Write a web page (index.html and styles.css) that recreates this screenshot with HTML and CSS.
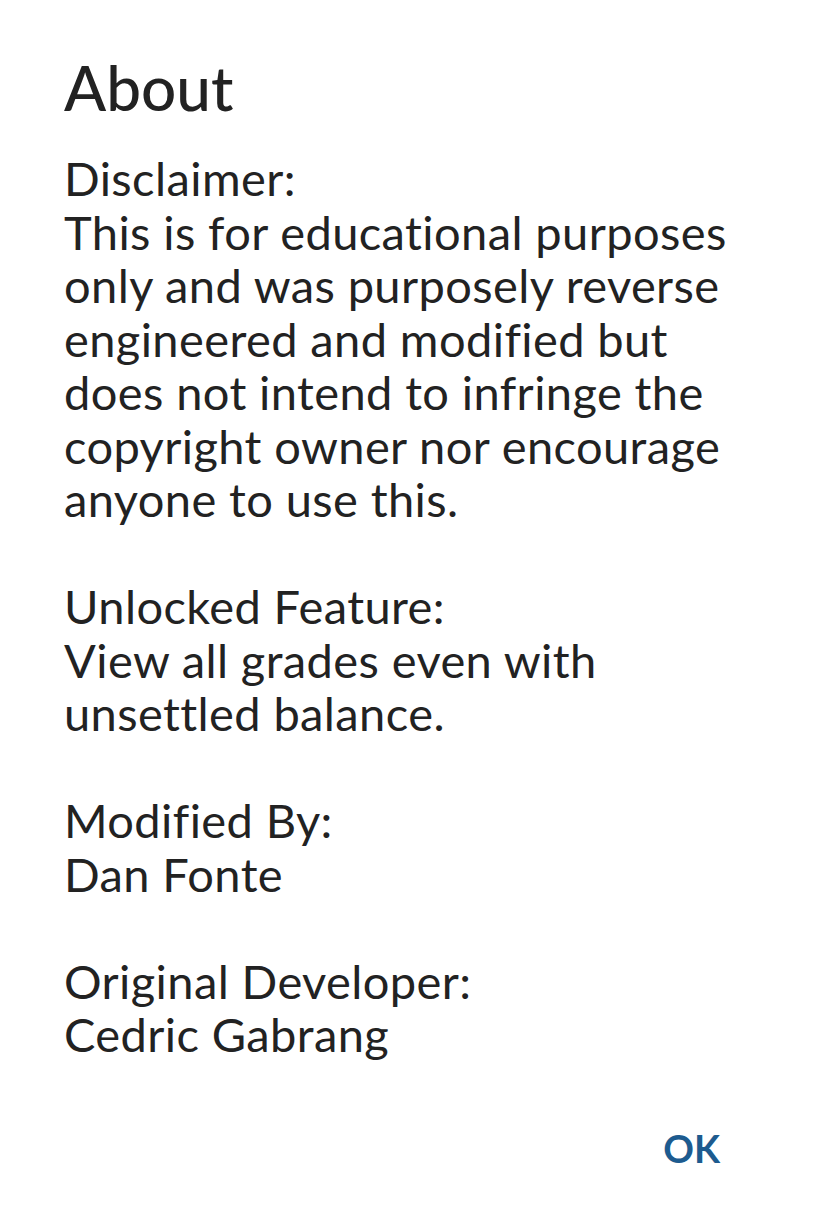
FILE: index.html
```html
<!DOCTYPE html>
<html>
<head>
<meta charset="utf-8">
<link rel="stylesheet" href="styles.css">
</head>
<body>
<div class="dialog">
  <h1 class="title">About</h1>
  <div class="message">
    <p class="para">Disclaimer:<br>This is for educational purposes<br>only and was purposely reverse<br>engineered and modified but<br>does not intend to infringe the<br>copyright owner nor encourage<br>anyone to use this.</p>
    <p class="para">Unlocked Feature:<br>View all grades even with<br>unsettled balance.</p>
    <p class="para">Modified By:<br>Dan Fonte</p>
    <p class="para">Original Developer:<br>Cedric Gabrang</p>
  </div>
  <div class="actions">
    <span class="btn">OK</span>
  </div>
</div>
</body>
</html>
```

FILE: styles.css
```css
html, body {
  margin: 0;
  padding: 0;
  background: #ffffff;
}
.dialog {
  width: 813px;
  height: 1223px;
  box-sizing: border-box;
  padding: 52px 93px 0 64px;
  font-family: "Lato", "Noto Sans", sans-serif;
  color: #222222;
}
.title {
  margin: 0;
  font-size: 62px;
  font-weight: 500;
  line-height: 70px;
  letter-spacing: 0;
}
.message {
  margin-top: 30px;
  font-size: 47px;
  line-height: 53.5px;
  font-weight: 400;
  letter-spacing: 0.4px;
}
.para {
  margin: 0 0 53.5px 0;
  white-space: nowrap;
}
.para:last-child {
  margin-bottom: 0;
}
.actions {
  display: flex;
  justify-content: flex-end;
  margin-top: 66px;
}
.btn {
  color: #1d5b8f;
  font-size: 38px;
  font-weight: 700;
  line-height: 40px;
}
```
